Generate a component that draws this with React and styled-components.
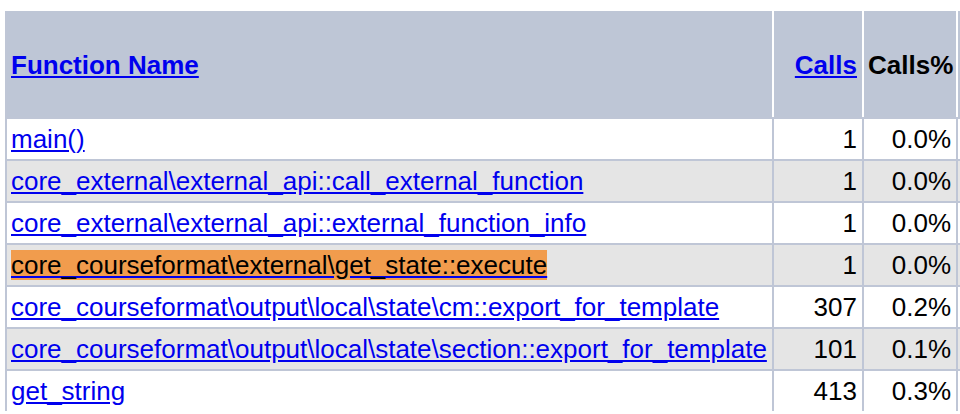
import React from "react";
import styled, { createGlobalStyle } from "styled-components";

const GlobalStyle = createGlobalStyle`
  html, body {
    margin: 0;
    padding: 0;
    background: #ffffff;
    overflow: hidden;
  }
  body {
    font-family: "Liberation Sans", Arial, sans-serif;
    font-size: 26px;
    color: #000000;
  }
`;

const Page = styled.div`
  padding: 11px 0 0 5px;
`;

const Table = styled.table`
  border-collapse: separate;
  border-spacing: 0;
  table-layout: fixed;
  width: 955px;
  border-left: 2px solid #bfc6d6;
  font-size: 26px;
  line-height: 30px;
`;

const HeadRow = styled.tr`
  background: #bec6d6;
`;

const HeadCell = styled.th`
  box-sizing: border-box;
  width: ${(p) => p.$w}px;
  height: 106px;
  padding: 2px 5px 0 4px;
  border-right: 2px solid #ffffff;
  text-align: ${(p) => (p.$left ? "left" : "right")};
  vertical-align: middle;
  font-weight: bold;
  white-space: nowrap;
`;

const EdgeHead = styled.th`
  width: 2px;
  padding: 0;
`;

const Row = styled.tr`
  background: ${(p) => (p.$alt ? "#e5e5e5" : "#ffffff")};
`;

const Cell = styled.td`
  box-sizing: border-box;
  height: 42px;
  padding: 5px 5px 5px 4px;
  border-top: 2px solid #bfc6d6;
  border-right: 2px solid #bfc6d6;
  text-align: ${(p) => (p.$left ? "left" : "right")};
  vertical-align: middle;
  white-space: nowrap;
`;

const EdgeCell = styled.td`
  box-sizing: border-box;
  width: 2px;
  padding: 0;
  border-top: 2px solid #bfc6d6;
`;

const Link = styled.a`
  color: #0000ee;
  text-decoration: underline;
  cursor: pointer;
`;

const Highlight = styled.span`
  background: #f19c4d;
  color: #000000;
`;

const rows = [
  { name: "main()", calls: "1", pct: "0.0%" },
  { name: "core_external\\external_api::call_external_function", calls: "1", pct: "0.0%" },
  { name: "core_external\\external_api::external_function_info", calls: "1", pct: "0.0%" },
  { name: "core_courseformat\\external\\get_state::execute", calls: "1", pct: "0.0%", hot: true },
  { name: "core_courseformat\\output\\local\\state\\cm::export_for_template", calls: "307", pct: "0.2%" },
  { name: "core_courseformat\\output\\local\\state\\section::export_for_template", calls: "101", pct: "0.1%" },
  { name: "get_string", calls: "413", pct: "0.3%" },
];

export default function App() {
  return (
    <Page>
      <GlobalStyle />
      <Table>
        <thead>
          <HeadRow>
            <HeadCell $w={767} $left>
              <Link>Function Name</Link>
            </HeadCell>
            <HeadCell $w={90}>
              <Link>Calls</Link>
            </HeadCell>
            <HeadCell $w={94}>Calls%</HeadCell>
            <EdgeHead />
          </HeadRow>
        </thead>
        <tbody>
          {rows.map((r, i) => (
            <Row key={i} $alt={i % 2 === 1}>
              <Cell $left>
                <Link>{r.hot ? <Highlight>{r.name}</Highlight> : r.name}</Link>
              </Cell>
              <Cell>{r.calls}</Cell>
              <Cell>{r.pct}</Cell>
              <EdgeCell />
            </Row>
          ))}
        </tbody>
      </Table>
    </Page>
  );
}
